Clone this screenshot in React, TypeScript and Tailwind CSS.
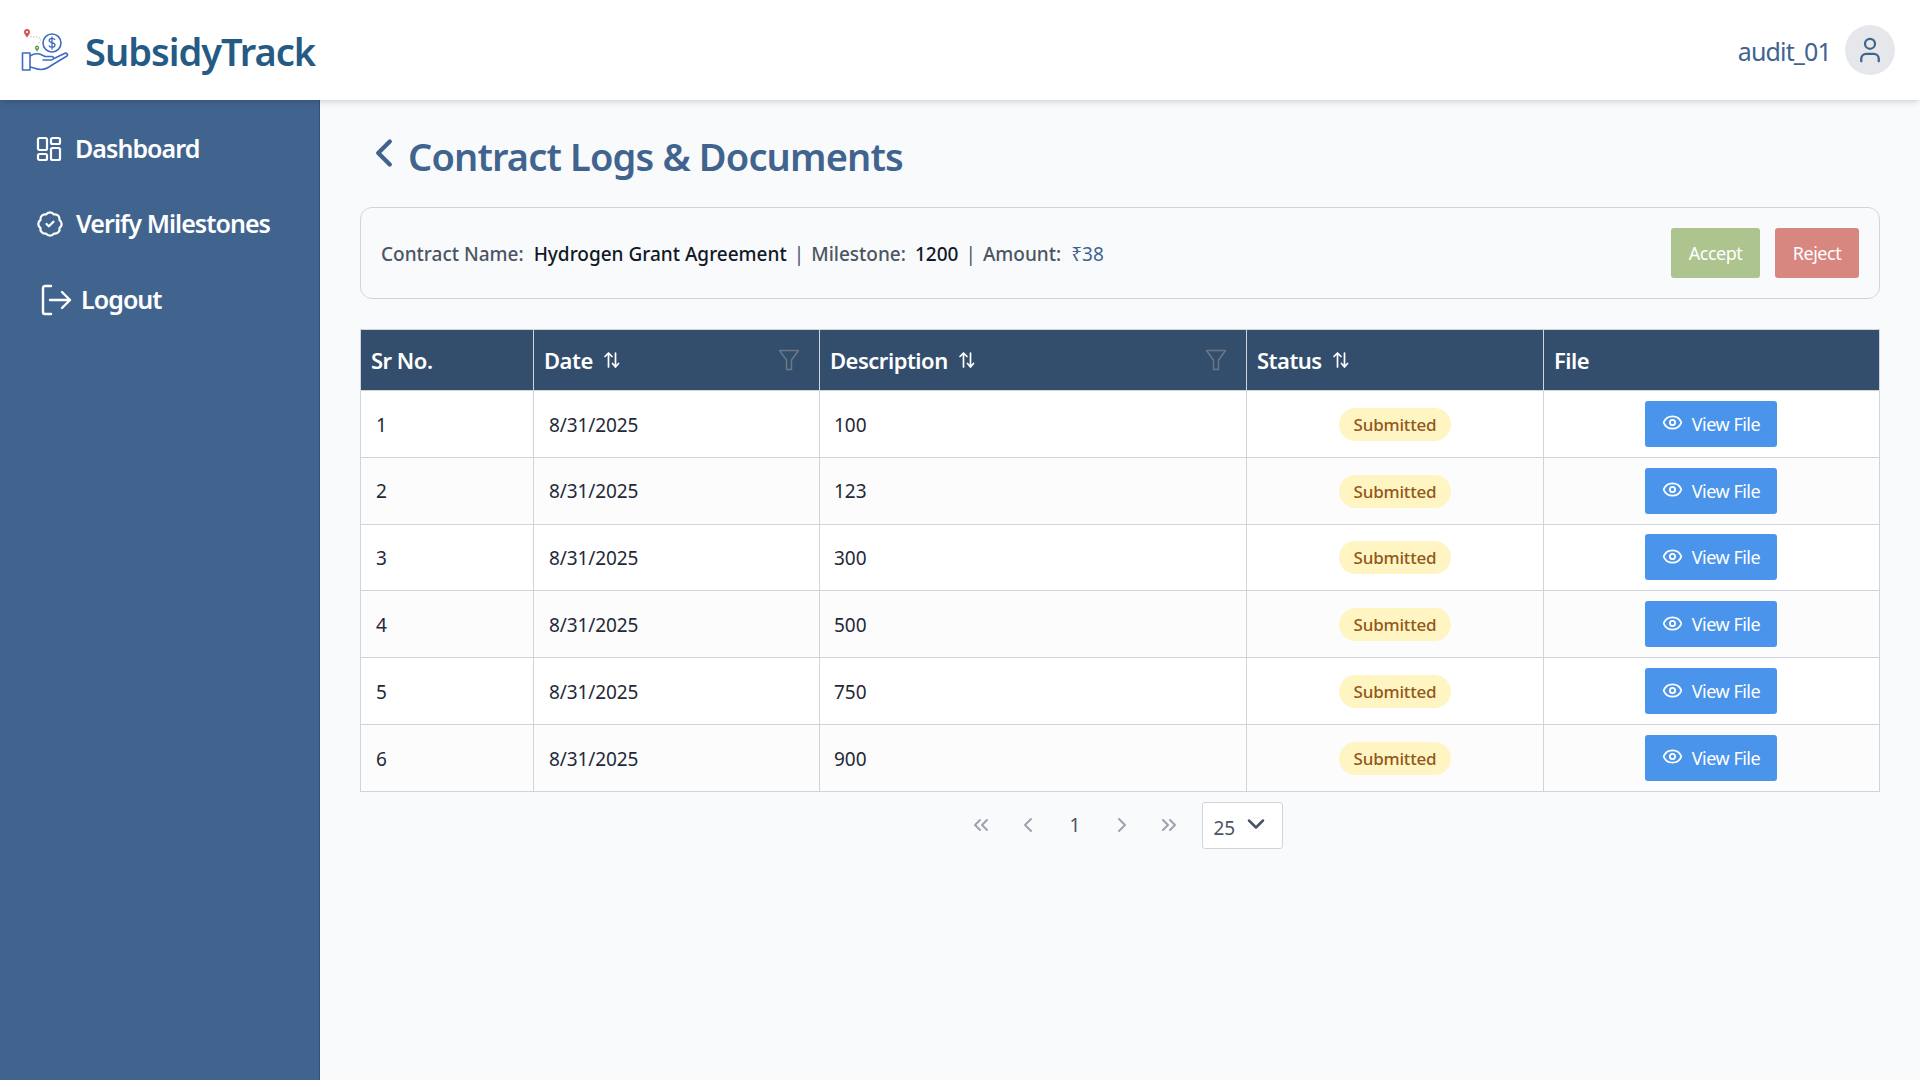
import { BadgeCheck, ChevronDown, ChevronLeft, ChevronRight, ChevronsLeft, ChevronsRight, Eye, User } from "lucide-react"

const rows = [
  { id: 1, date: "8/31/2025", desc: "100" },
  { id: 2, date: "8/31/2025", desc: "123" },
  { id: 3, date: "8/31/2025", desc: "300" },
  { id: 4, date: "8/31/2025", desc: "500" },
  { id: 5, date: "8/31/2025", desc: "750" },
  { id: 6, date: "8/31/2025", desc: "900" },
]

function Logo() {
  return (
    <svg width="48" height="44" viewBox="0 0 48 44" fill="none">
      <path d="M6 1C4.300 1 3 2.300 3 4c0 2 3 5.500 3 5.500S9 6 9 4c0-1.700-1.300-3-3-3z" fill="#d9534f" />
      <circle cx="6" cy="4" r="1.100" fill="#fff" />
      <path d="M9 9h8l3 2-3 6" stroke="#aaa" strokeWidth="0.800" strokeDasharray="1.500 1.500" />
      <path d="M16 17.500c-1.300 0-2.200 1-2.200 2.200 0 1.500 2.200 3.800 2.200 3.800s2.200-2.300 2.200-3.800c0-1.200-.9-2.200-2.200-2.200z" fill="#5cab4a" />
      <circle cx="16" cy="19.700" r=".7" fill="#fff" />
      <circle cx="31" cy="15" r="9" stroke="#3f6cc0" strokeWidth="1.600" />
      <path d="M34 11.800c-.6-1-1.700-1.500-3-1.500-1.600 0-2.800.8-2.800 2.200 0 3 5.800 1.500 5.800 4.500 0 1.400-1.300 2.200-3 2.200-1.300 0-2.500-.6-3.100-1.600M31 8.500v13" stroke="#3f6cc0" strokeWidth="1.300" />
      <path d="M1.500 25h7.500v17H1.500zM9 28c4-2.500 8-3 12-1l3 1.500h7c2 0 2 3.500-.5 3.500H22M9 39c3 .5 7 2.500 11 2.500 4.500 0 7-1.500 11-4.500l15-9c1.500-1.500-.5-3.500-2.500-2.500L33 30.500" stroke="#3f6cc0" strokeWidth="1.600" strokeLinejoin="round" strokeLinecap="round" />
    </svg>
  )
}

function GridIcon() {
  return (
    <svg width="26" height="26" viewBox="0 0 26 26" fill="none" stroke="currentColor" strokeWidth="2.200">
      <rect x="2" y="2" width="9" height="12" rx="1.500" />
      <rect x="15" y="2" width="9" height="6" rx="1.500" />
      <rect x="2" y="18" width="9" height="6" rx="1.500" />
      <rect x="15" y="12" width="9" height="12" rx="1.500" />
    </svg>
  )
}

function LogoutIcon() {
  return (
    <svg width="32" height="32" viewBox="0 0 32 32" fill="none" stroke="currentColor" strokeWidth="2.400" strokeLinecap="round" strokeLinejoin="round">
      <path d="M11 2H5a2 2 0 0 0-2 2v24a2 2 0 0 0 2 2h6" />
      <path d="M10 16h20M22 8l8 8-8 8" />
    </svg>
  )
}

function SortIcon() {
  return (
    <svg width="18" height="18" viewBox="0 0 18 18" fill="none" stroke="currentColor" strokeWidth="1.700" strokeLinecap="round" strokeLinejoin="round">
      <path d="M5.500 16V2M2 5.500 5.500 2 9 5.500M12.500 2v14M9.500 12.500l3 3.500 3-3.500" />
    </svg>
  )
}

function FilterIcon() {
  return (
    <svg width="22" height="22" viewBox="0 0 22 22" fill="none" stroke="#6b7785" strokeWidth="1.500" strokeLinejoin="round">
      <path d="M1.500 1.500h19L13.500 11v9.500h-5V11z" />
    </svg>
  )
}

export default function App() {
  return (
    <div className="h-[1080px] overflow-hidden bg-[#f9fafb] font-['Noto_Sans',sans-serif] flex flex-col">
      <header className="h-[100px] shrink-0 bg-white shadow-md z-10 flex items-center justify-between pl-[21px] pr-[25px]">
        <div className="flex items-center gap-[16px]">
          <Logo />
          <span className="text-[38px] font-semibold text-[#255a85] tracking-[-1px] mt-[2px]">SubsidyTrack</span>
        </div>
        <div className="flex items-center gap-[14px]">
          <span className="text-[25px] text-[#41648f] tracking-[-0.85px] mt-[3px]">audit_01</span>
          <div className="w-[50px] h-[50px] rounded-full bg-[#e5e7eb] flex items-center justify-center text-[#41648f]">
            <User size={30} strokeWidth={1.800} />
          </div>
        </div>
      </header>

      <div className="flex flex-1">
        <aside className="w-[320px] shrink-0 bg-[#41648f] border-r border-[#35517a] text-white pt-[25px] pl-[36px] flex flex-col">
          <div className="flex items-center gap-[13px] h-[48px]">
            <GridIcon />
            <span className="text-[25px] font-semibold tracking-[-0.95px]">Dashboard</span>
          </div>
          <div className="flex items-center gap-[12px] h-[48px] mt-[27px]">
            <BadgeCheck size={28} strokeWidth={1.900} />
            <span className="text-[25px] font-semibold tracking-[-0.95px]">Verify Milestones</span>
          </div>
          <div className="flex items-center gap-[9px] h-[48px] mt-[28px] pl-[4px]">
            <LogoutIcon />
            <span className="text-[25px] font-semibold tracking-[-0.95px]">Logout</span>
          </div>
        </aside>

        <main className="flex-1 pl-[40px] pr-[41px] pt-[26px]">
          <div className="flex items-center h-[60px] pl-[1px] text-[#41648f]">
            <ChevronLeft size={46} strokeWidth={2.300} className="-mt-[7px]" />
            <h1 className="text-[38px] font-semibold tracking-[-0.85px] ml-[1px]">Contract Logs &amp; Documents</h1>
          </div>

          <div className="mt-[21px] h-[92px] border border-[#d1d5db] rounded-[12px] flex items-center justify-between pl-[20px] pr-[20px] text-[19px]">
            <div className="flex items-center text-[#4b5563] mt-[2px]">
              <span className="font-medium">Contract Name:</span>
              <span className="ml-[10px] font-medium text-[#111827]">Hydrogen Grant Agreement</span>
              <span className="mx-[7px]">|</span>
              <span className="font-medium">Milestone:</span>
              <span className="ml-[9px] font-medium text-[#111827]">1200</span>
              <span className="mx-[7px]">|</span>
              <span className="font-medium">Amount:</span>
              <span className="ml-[10px] text-[#41648f]">₹38</span>
            </div>
            <div className="flex items-center gap-[15px]">
              <button className="w-[89px] h-[50px] rounded-[3px] bg-[#adc48f] text-white text-[18px] tracking-[-0.5px]">Accept</button>
              <button className="w-[84px] h-[50px] rounded-[3px] bg-[#d88780] text-white text-[18px] tracking-[-0.5px]">Reject</button>
            </div>
          </div>

          <table className="mt-[30px] w-[1519px] table-fixed border-collapse text-[19px] text-[#1f2937]">
            <colgroup>
              <col className="w-[173px]" />
              <col className="w-[286px]" />
              <col className="w-[427px]" />
              <col className="w-[297px]" />
              <col className="w-[336px]" />
            </colgroup>
            <thead>
              <tr className="h-[61px] bg-[#334e6d] text-white text-[22px] font-semibold text-left">
                <th className="border border-[#d1d5db] px-[10px] font-semibold tracking-[-0.5px]">Sr No.</th>
                <th className="border border-[#d1d5db] px-[10px] font-semibold tracking-[-0.5px]">
                  <div className="flex items-center">
                    <span>Date</span>
                    <span className="ml-[10px]"><SortIcon /></span>
                    <span className="ml-auto mr-[9px]"><FilterIcon /></span>
                  </div>
                </th>
                <th className="border border-[#d1d5db] px-[10px] font-semibold tracking-[-0.5px]">
                  <div className="flex items-center">
                    <span>Description</span>
                    <span className="ml-[10px]"><SortIcon /></span>
                    <span className="ml-auto mr-[9px]"><FilterIcon /></span>
                  </div>
                </th>
                <th className="border border-[#d1d5db] px-[10px] font-semibold tracking-[-0.5px]">
                  <div className="flex items-center">
                    <span>Status</span>
                    <span className="ml-[10px]"><SortIcon /></span>
                  </div>
                </th>
                <th className="border border-[#d1d5db] px-[10px] font-semibold tracking-[-0.5px]">File</th>
              </tr>
            </thead>
            <tbody>
              {rows.map((row) => (
                <tr key={row.id} className={row.id % 2 === 0 ? "h-[66.800px] bg-[#fcfcfd]" : "h-[66.800px] bg-white"}>
                  <td className="border border-[#d1d5db] pl-[15px] pt-[2px]">{row.id}</td>
                  <td className="border border-[#d1d5db] pl-[15px] pt-[2px] tracking-[-0.1px]">{row.date}</td>
                  <td className="border border-[#d1d5db] pl-[14px] pt-[2px]">{row.desc}</td>
                  <td className="border border-[#d1d5db] pt-[1px] text-center">
                    <span className="inline-block px-[15px] h-[33px] leading-[33px] rounded-full bg-[#fef5c3] text-[#92581a] text-[17px] font-medium tracking-[-0.2px]">
                      Submitted
                    </span>
                  </td>
                  <td className="border border-[#d1d5db] text-center">
                    <button className="inline-flex items-center justify-center gap-[9px] w-[132px] h-[46px] rounded-[3px] bg-[#4a94ec] text-white text-[18px] tracking-[-0.5px] -ml-[1px]">
                      <Eye size={21} strokeWidth={2} className="-mt-[2px]" />
                      <span className="mt-[1px]">View File</span>
                    </button>
                  </td>
                </tr>
              ))}
            </tbody>
          </table>

          <div className="mt-[10px] flex items-center justify-center text-[#9ca3af]">
            <div className="w-[47px] flex justify-center"><ChevronsLeft size={24} strokeWidth={2} /></div>
            <div className="w-[47px] flex justify-center"><ChevronLeft size={24} strokeWidth={2} /></div>
            <div className="w-[47px] flex justify-center text-[19px] text-[#4b5563]">1</div>
            <div className="w-[47px] flex justify-center"><ChevronRight size={24} strokeWidth={2} /></div>
            <div className="w-[47px] flex justify-center"><ChevronsRight size={24} strokeWidth={2} /></div>
            <div className="ml-[9px] w-[81px] h-[47px] rounded-[3px] border border-[#d1d5db] bg-white flex items-center justify-between pl-[11px] pr-[12px] text-[#4b5563] text-[19px]">
              <span className="mt-[5px]">25</span>
              <ChevronDown size={28} strokeWidth={2.200} className="-mt-[2px]" />
            </div>
          </div>
        </main>
      </div>
    </div>
  )
}
